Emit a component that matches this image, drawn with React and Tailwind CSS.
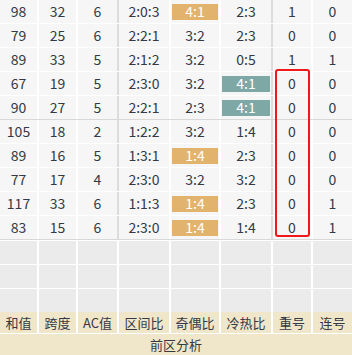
import React from "react";

const rows = [
  ["98", "32", "6", "2:0:3", ["4:1", "o"], ["2:3"], "1", "0"],
  ["79", "25", "6", "2:2:1", ["3:2"], ["2:3"], "0", "0"],
  ["89", "33", "5", "2:1:2", ["3:2"], ["0:5"], "1", "1"],
  ["67", "19", "5", "2:3:0", ["3:2"], ["4:1", "t"], "0", "0"],
  ["90", "27", "5", "2:2:1", ["2:3"], ["4:1", "t"], "0", "0"],
  ["105", "18", "2", "1:2:2", ["3:2"], ["1:4"], "0", "0"],
  ["89", "16", "5", "1:3:1", ["1:4", "o"], ["2:3"], "0", "0"],
  ["77", "17", "4", "2:3:0", ["3:2"], ["3:2"], "0", "0"],
  ["117", "33", "6", "1:1:3", ["1:4", "o"], ["2:3"], "0", "1"],
  ["83", "15", "6", "2:3:0", ["1:4", "o"], ["1:4"], "0", "1"],
];

const widths = ["w-[39px]", "w-[39px]", "w-[41px]", "w-[52px]", "w-[50px]", "w-[52px]", "w-[40px]", "w-[39px]"];
const headers = ["和值", "跨度", "AC值", "区间比", "奇偶比", "冷热比", "重号", "连号"];

function borderFor(i, grey) {
  if (i === 7) return "";
  if (grey && (i === 2 || i === 5)) return "border-r-2 border-[#dcdcdc]";
  return "border-r-2 border-white";
}

function Badge({ value }) {
  const [text, kind] = value;
  if (!kind) return <span>{text}</span>;
  return (
    <span
      className={`flex h-[16px] w-full items-center justify-center text-white ${
        kind === "o" ? "bg-[#e2b36d]" : "bg-[#7ea8a5]"
      }`}
    >
      {text}
    </span>
  );
}

export default function App() {
  return (
    <div
      className="relative w-[352px] h-[355px] overflow-hidden bg-white text-[#333a45]"
      style={{ fontFamily: '"Noto Sans CJK SC", "Noto Sans", sans-serif' }}
    >
      {rows.map((r, ri) => (
        <div
          key={ri}
          className={`flex h-[24px] border-b ${ri === 4 || ri === 9 ? "border-[#d8d8d8]" : "border-white"}`}
        >
          {r.map((c, ci) => (
            <div
              key={ci}
              className={`${widths[ci]} ${borderFor(ci, true)} flex items-center justify-center bg-[#f6f6f6] text-[14px] ${
                ci === 4 || ci === 5 ? "px-[1px]" : ""
              }`}
            >
              {Array.isArray(c) ? <Badge value={c} /> : c}
            </div>
          ))}
        </div>
      ))}
      {[0, 1, 2].map((k) => (
        <div key={k} className="flex h-[24px] border-t border-white">
          {widths.map((w, ci) => (
            <div key={ci} className={`${w} ${borderFor(ci, false)} bg-[#ebebeb]`} />
          ))}
        </div>
      ))}
      <div className="flex h-[22px] border-b border-white">
        {headers.map((h, ci) => (
          <div
            key={ci}
            className={`${widths[ci]} ${borderFor(ci, false)} flex items-center justify-center bg-[#f0e6c9] text-[13px]`}
          >
            {h}
          </div>
        ))}
      </div>
      <div className="flex h-[21px] items-center justify-center bg-[#f0e6c9] text-[13px]">前区分析</div>
      <div className="absolute left-[275px] top-[69px] h-[168px] w-[35px] rounded-[3px] border-2 border-[#f01818]" />
    </div>
  );
}
